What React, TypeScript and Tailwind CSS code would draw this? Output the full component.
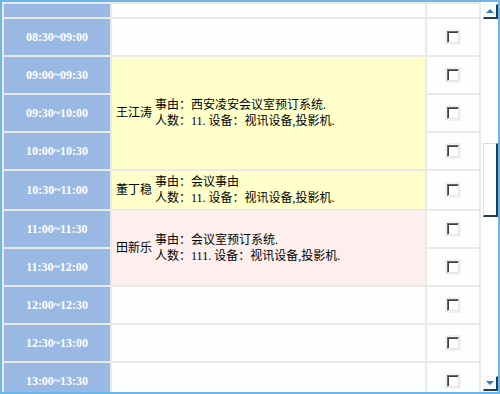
import React from "react";

type Booking = { name: string; reason: string; people: string; span: number; tone: "yellow" | "pink" };

// slot label, row height, and booking that starts on this slot (if any)
const slots: { label: string; h: string; booking?: Booking; covered?: boolean }[] = [
  { label: "", h: "h-[13px]" },
  { label: "08:30~09:00", h: "h-[36px]" },
  {
    label: "09:00~09:30",
    h: "h-[36px]",
    booking: { name: "王江涛", reason: "西安凌安会议室预订系统.", people: "11", span: 3, tone: "yellow" },
  },
  { label: "09:30~10:00", h: "h-[36px]", covered: true },
  { label: "10:00~10:30", h: "h-[36px]", covered: true },
  {
    label: "10:30~11:00",
    h: "h-[38px]",
    booking: { name: "董丁稳", reason: "会议事由", people: "11", span: 1, tone: "yellow" },
  },
  {
    label: "11:00~11:30",
    h: "h-[36px]",
    booking: { name: "田新乐", reason: "会议室预订系统.", people: "111", span: 2, tone: "pink" },
  },
  { label: "11:30~12:00", h: "h-[36px]", covered: true },
  { label: "12:00~12:30", h: "h-[36px]" },
  { label: "12:30~13:00", h: "h-[36px]" },
  { label: "13:00~13:30", h: "h-[36px]" },
];

const spanClass: Record<number, string> = { 1: "row-span-1", 2: "row-span-2", 3: "row-span-3" };

function CheckBox() {
  return (
    <div className="rounded-[1px] bg-[#f1f1f1] p-[2px]">
      <div className="h-[12px] w-[12px] border border-t-[#6a6a6a] border-l-[#6a6a6a] border-r-[#e2e2e2] border-b-[#e2e2e2] bg-white shadow-[inset_1px_1px_0_#404040]" />
    </div>
  );
}

function BookingCell({ b }: { b: Booking }) {
  return (
    <div
      className={`${spanClass[b.span]} col-start-2 flex items-center pl-[4px] text-[12px] leading-[16px] text-black ${
        b.tone === "yellow" ? "bg-[#ffffcc]" : "bg-[#fcefee]"
      }`}
    >
      <span className="mr-[3px]">{b.name}</span>
      <div>
        <div>事由：{b.reason}</div>
        <div>人数：{b.people}. 设备：视讯设备,投影机.</div>
      </div>
    </div>
  );
}

function ScrollButton({ up }: { up?: boolean }) {
  return (
    <div className="flex h-[15px] w-[15px] items-center justify-center border-r-2 border-b-2 border-t border-l border-r-[#1c3d66] border-b-[#1c3d66] border-t-[#f4f4f4] border-l-[#f4f4f4] bg-[#fbfbfb]">
      <div
        className={`h-0 w-0 border-x-[4px] border-x-transparent ${
          up ? "border-b-[4px] border-b-[#2e78c6]" : "border-t-[4px] border-t-[#2e78c6]"
        }`}
      />
    </div>
  );
}

export default function App() {
  return (
    <div
      className="relative flex h-[394px] w-[500px] overflow-hidden border-2 border-[#6cb7e8] bg-white"
      style={{ fontFamily: '"Liberation Serif", "Noto Sans CJK SC", serif' }}
    >
      <div className="h-full overflow-hidden bg-[#e9e9e9] pl-[2px] pr-[2px] pt-[2px]">
        <div className="grid grid-cols-[106px_313px_52px] gap-[2px]">
          {slots.map((s, i) => (
            <React.Fragment key={i}>
              <div
                className={`${s.h} col-start-1 flex items-center justify-center bg-[#99b9e4] text-[12px] font-bold text-white`}
              >
                {s.label}
              </div>
              {s.booking ? (
                <BookingCell b={s.booking} />
              ) : s.covered ? null : (
                <div className="col-start-2 bg-[#fdfffd]" />
              )}
              <div className="col-start-3 flex items-center justify-center bg-[#fdfffd]">
                {i > 0 && <CheckBox />}
              </div>
            </React.Fragment>
          ))}
        </div>
      </div>

      <div className="flex flex-1 flex-col items-end bg-white pb-[1px] pt-[2px]">
        <ScrollButton up />
        <div className="mt-[124px] h-[74px] w-[15px] border-r-2 border-b-2 border-t border-l border-r-[#1c3d66] border-b-[#1c3d66] border-t-[#dcdcdc] border-l-[#dcdcdc] bg-white" />
        <div className="flex-1" />
        <ScrollButton />
      </div>
    </div>
  );
}
